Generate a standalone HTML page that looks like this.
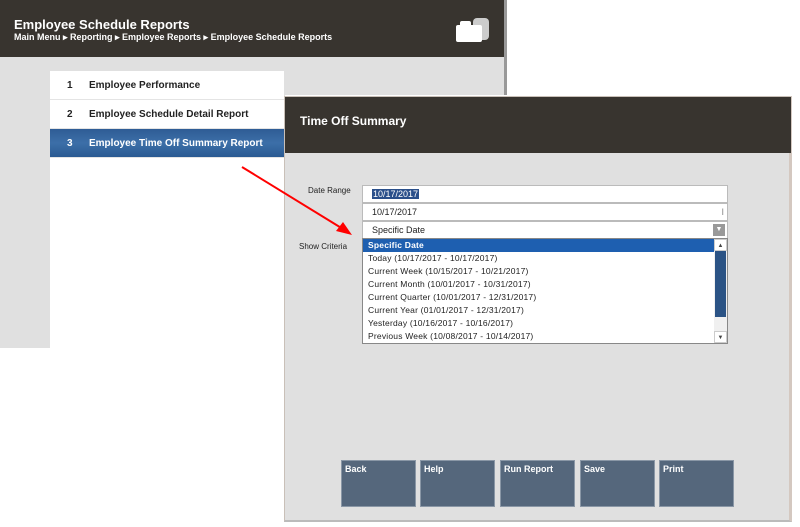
<!DOCTYPE html>
<html><head><style>
*{margin:0;padding:0;box-sizing:border-box}
body{width:800px;height:527px;background:#fff;position:relative;overflow:hidden;font-family:"Liberation Sans",sans-serif}
.abs{position:absolute}
.hd{background:#38342f;color:#fff}
.item{position:absolute;left:50px;width:234px;height:29px;font-size:10px;font-weight:bold;color:#222;border-bottom:1px solid #e4e4e4;line-height:29px}
.item span{position:absolute;left:17px}
.item b{position:absolute;left:39px}
.fld{position:absolute;left:362px;width:366px;height:18px;background:#fff;border:1px solid #bbb;font-size:9px;line-height:16px;padding-left:9px;color:#222}
.opt{height:13px;line-height:13px;font-size:8.5px;padding-left:5px;color:#222;letter-spacing:.2px}
.btn{position:absolute;top:460px;width:75px;height:47px;background:#55677c;border:1px solid #8a97a6;color:#fff;font-size:9px;font-weight:bold;padding:3px 3px}
</style></head><body>
<!-- back window -->
<div class="abs" style="left:0;top:0;width:507px;height:95px;background:#e0e0e0;border-right:3px solid #999"></div>
<div class="abs" style="left:0;top:95px;width:285px;height:253px;background:#e0e0e0"></div>
<div class="abs hd" style="left:0;top:0;width:504px;height:57px">
 <div class="abs" style="left:14px;top:17px;font-size:13px;font-weight:bold">Employee Schedule Reports</div>
 <div class="abs" style="left:14px;top:32px;font-size:9px;font-weight:bold">Main Menu ▸ Reporting ▸ Employee Reports ▸ Employee Schedule Reports</div>
 <div class="abs" style="left:473px;top:18px;width:16px;height:22px;background:#ccc;border-radius:4px"></div>
 <div class="abs" style="left:456px;top:25px;width:26px;height:17px;background:#fff;border-radius:2px"></div>
 <div class="abs" style="left:460px;top:21px;width:11px;height:5px;background:#fff;border-radius:2px 2px 0 0"></div>
</div>
<div class="abs" style="left:50px;top:71px;width:234px;height:277px;background:#fff"></div>
<div class="item" style="top:71px"><span>1</span><b>Employee Performance</b></div>
<div class="item" style="top:100px"><span>2</span><b>Employee Schedule Detail Report</b></div>
<div class="item" style="top:129px;background:linear-gradient(#2e5c95,#3c6fa8 50%,#2a5a92);color:#fff"><span>3</span><b>Employee Time Off Summary Report</b></div>
<!-- front window -->
<div class="abs" style="left:284px;top:96px;width:508px;height:426px;background:#e0e0e0;border:1px solid #c9c0b8;border-bottom:2px solid #bbb;border-right:3px solid #d4c8c0"></div>
<div class="abs hd" style="left:285px;top:97px;width:506px;height:56px">
 <div class="abs" style="left:15px;top:17px;font-size:12px;font-weight:bold">Time Off Summary</div>
</div>
<div class="abs" style="left:308px;top:186px;font-size:8px;color:#222">Date Range</div>
<div class="abs" style="left:299px;top:242px;font-size:8px;color:#222">Show Criteria</div>
<div class="fld" style="top:185px"><span style="background:#2a4f8a;color:#fff;padding:0 1px">10/17/2017</span></div>
<div class="fld" style="top:203px">10/17/2017<span style="position:absolute;right:3px;top:0;color:#888">I</span></div>
<div class="fld" style="top:221px">Specific Date<span style="position:absolute;right:2px;top:2px;width:12px;height:12px;background:#999;color:#fff;font-size:7px;line-height:12px;text-align:center">▼</span></div>
<div class="abs" style="left:362px;top:238px;width:366px;height:106px;background:#fff;border:1px solid #888">
 <div class="opt" style="background:#1e5fb0;color:#fff;font-weight:bold;width:352px">Specific Date</div>
 <div class="opt">Today (10/17/2017 - 10/17/2017)</div>
 <div class="opt">Current Week (10/15/2017 - 10/21/2017)</div>
 <div class="opt">Current Month (10/01/2017 - 10/31/2017)</div>
 <div class="opt">Current Quarter (10/01/2017 - 12/31/2017)</div>
 <div class="opt">Current Year (01/01/2017 - 12/31/2017)</div>
 <div class="opt">Yesterday (10/16/2017 - 10/16/2017)</div>
 <div class="opt">Previous Week (10/08/2017 - 10/14/2017)</div>
 <div class="abs" style="right:0;top:0;width:13px;height:104px;background:#f0f0f0"></div>
 <div class="abs" style="right:1px;top:12px;width:11px;height:66px;background:#2b5385"></div>
 <div class="abs" style="right:0;top:0;width:13px;height:12px;font-size:6px;text-align:center;line-height:12px;color:#444;border:1px solid #ccc;background:#fff">▲</div>
 <div class="abs" style="right:0;bottom:0;width:13px;height:12px;font-size:6px;text-align:center;line-height:12px;color:#444;border:1px solid #ccc;background:#fff">▼</div>
</div>
<div class="btn" style="left:341px">Back</div>
<div class="btn" style="left:420px">Help</div>
<div class="btn" style="left:500px">Run Report</div>
<div class="btn" style="left:580px">Save</div>
<div class="btn" style="left:659px">Print</div>
<svg class="abs" style="left:0;top:0" width="800" height="527"><line x1="242" y1="167" x2="343" y2="229" stroke="#f00" stroke-width="2"/><polygon points="352,235 336,231 343,222" fill="#f00"/></svg>
</body></html>
